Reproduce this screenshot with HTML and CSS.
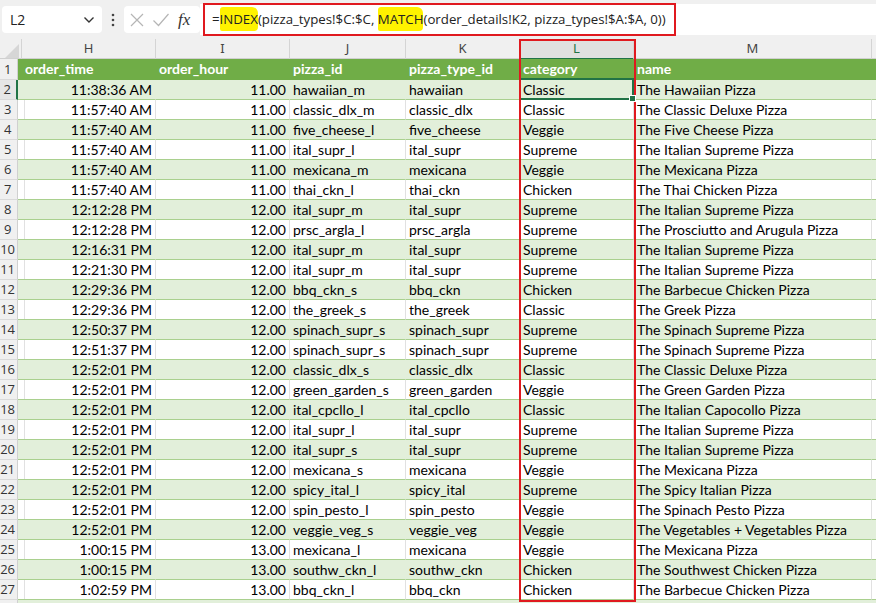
FILE: index.html
```html
<!DOCTYPE html>
<html>
<head>
<meta charset="utf-8">
<link rel="stylesheet" href="styles.css">
</head>
<body>
<div class="toolbar">
  <div class="namebox"><span>L2</span>
    <svg width="12" height="8" viewBox="0 0 12 8"><path d="M1.5 1.5 L6 6 L10.5 1.5" fill="none" stroke="#333" stroke-width="1.4"/></svg>
  </div>
  <div class="dots"><svg width="4" height="14" viewBox="0 0 4 14"><circle cx="2" cy="2" r="1.3" fill="#444"/><circle cx="2" cy="7" r="1.3" fill="#444"/><circle cx="2" cy="12" r="1.3" fill="#444"/></svg></div>
  <div class="fxbox">
    <svg width="16" height="16" viewBox="0 0 16 16"><path d="M2 2 L14 14 M14 2 L2 14" stroke="#b5b5b5" stroke-width="1.2" fill="none"/></svg>
    <svg width="18" height="16" viewBox="0 0 18 16"><path d="M1.5 8.5 L6.5 13.5 L16.5 2" stroke="#b5b5b5" stroke-width="1.2" fill="none"/></svg>
    <span class="fx">fx</span>
  </div>
  <div class="formula">
    <div class="fbox">=<span class="hl">INDEX</span>(pizza_types!$C:$C, <span class="hl">MATCH</span>(order_details!K2, pizza_types!$A:$A, 0))</div>
  </div>
</div>
<div class="grid">
  <div class="row colhdr"><div class="corner"><svg width="14" height="14" viewBox="0 0 14 14"><path d="M14 0 L14 14 L0 14 Z" fill="#d6d6d6"/></svg></div><div class="ch">H</div><div class="ch">I</div><div class="ch">J</div><div class="ch">K</div><div class="ch sel">L</div><div class="ch">M</div><div class="ch"></div></div>
  <div class="row thead"><div class="rh">1</div><div class="c"></div><div class="c">order_time</div><div class="c">order_hour</div><div class="c">pizza_id</div><div class="c">pizza_type_id</div><div class="c">category</div><div class="c">name</div><div class="c"></div></div>
  <div class="row band"><div class="rh selrow">2</div><div class="c"></div><div class="c r">11:38:36 AM</div><div class="c r">11.00</div><div class="c">hawaiian_m</div><div class="c">hawaiian</div><div class="c active">Classic</div><div class="c">The Hawaiian Pizza</div><div class="c"></div></div>
  <div class="row"><div class="rh">3</div><div class="c"></div><div class="c r">11:57:40 AM</div><div class="c r">11.00</div><div class="c">classic_dlx_m</div><div class="c">classic_dlx</div><div class="c">Classic</div><div class="c">The Classic Deluxe Pizza</div><div class="c"></div></div>
  <div class="row band"><div class="rh">4</div><div class="c"></div><div class="c r">11:57:40 AM</div><div class="c r">11.00</div><div class="c">five_cheese_l</div><div class="c">five_cheese</div><div class="c">Veggie</div><div class="c">The Five Cheese Pizza</div><div class="c"></div></div>
  <div class="row"><div class="rh">5</div><div class="c"></div><div class="c r">11:57:40 AM</div><div class="c r">11.00</div><div class="c">ital_supr_l</div><div class="c">ital_supr</div><div class="c">Supreme</div><div class="c">The Italian Supreme Pizza</div><div class="c"></div></div>
  <div class="row band"><div class="rh">6</div><div class="c"></div><div class="c r">11:57:40 AM</div><div class="c r">11.00</div><div class="c">mexicana_m</div><div class="c">mexicana</div><div class="c">Veggie</div><div class="c">The Mexicana Pizza</div><div class="c"></div></div>
  <div class="row"><div class="rh">7</div><div class="c"></div><div class="c r">11:57:40 AM</div><div class="c r">11.00</div><div class="c">thai_ckn_l</div><div class="c">thai_ckn</div><div class="c">Chicken</div><div class="c">The Thai Chicken Pizza</div><div class="c"></div></div>
  <div class="row band"><div class="rh">8</div><div class="c"></div><div class="c r">12:12:28 PM</div><div class="c r">12.00</div><div class="c">ital_supr_m</div><div class="c">ital_supr</div><div class="c">Supreme</div><div class="c">The Italian Supreme Pizza</div><div class="c"></div></div>
  <div class="row"><div class="rh">9</div><div class="c"></div><div class="c r">12:12:28 PM</div><div class="c r">12.00</div><div class="c">prsc_argla_l</div><div class="c">prsc_argla</div><div class="c">Supreme</div><div class="c">The Prosciutto and Arugula Pizza</div><div class="c"></div></div>
  <div class="row band"><div class="rh">10</div><div class="c"></div><div class="c r">12:16:31 PM</div><div class="c r">12.00</div><div class="c">ital_supr_m</div><div class="c">ital_supr</div><div class="c">Supreme</div><div class="c">The Italian Supreme Pizza</div><div class="c"></div></div>
  <div class="row"><div class="rh">11</div><div class="c"></div><div class="c r">12:21:30 PM</div><div class="c r">12.00</div><div class="c">ital_supr_m</div><div class="c">ital_supr</div><div class="c">Supreme</div><div class="c">The Italian Supreme Pizza</div><div class="c"></div></div>
  <div class="row band"><div class="rh">12</div><div class="c"></div><div class="c r">12:29:36 PM</div><div class="c r">12.00</div><div class="c">bbq_ckn_s</div><div class="c">bbq_ckn</div><div class="c">Chicken</div><div class="c">The Barbecue Chicken Pizza</div><div class="c"></div></div>
  <div class="row"><div class="rh">13</div><div class="c"></div><div class="c r">12:29:36 PM</div><div class="c r">12.00</div><div class="c">the_greek_s</div><div class="c">the_greek</div><div class="c">Classic</div><div class="c">The Greek Pizza</div><div class="c"></div></div>
  <div class="row band"><div class="rh">14</div><div class="c"></div><div class="c r">12:50:37 PM</div><div class="c r">12.00</div><div class="c">spinach_supr_s</div><div class="c">spinach_supr</div><div class="c">Supreme</div><div class="c">The Spinach Supreme Pizza</div><div class="c"></div></div>
  <div class="row"><div class="rh">15</div><div class="c"></div><div class="c r">12:51:37 PM</div><div class="c r">12.00</div><div class="c">spinach_supr_s</div><div class="c">spinach_supr</div><div class="c">Supreme</div><div class="c">The Spinach Supreme Pizza</div><div class="c"></div></div>
  <div class="row band"><div class="rh">16</div><div class="c"></div><div class="c r">12:52:01 PM</div><div class="c r">12.00</div><div class="c">classic_dlx_s</div><div class="c">classic_dlx</div><div class="c">Classic</div><div class="c">The Classic Deluxe Pizza</div><div class="c"></div></div>
  <div class="row"><div class="rh">17</div><div class="c"></div><div class="c r">12:52:01 PM</div><div class="c r">12.00</div><div class="c">green_garden_s</div><div class="c">green_garden</div><div class="c">Veggie</div><div class="c">The Green Garden Pizza</div><div class="c"></div></div>
  <div class="row band"><div class="rh">18</div><div class="c"></div><div class="c r">12:52:01 PM</div><div class="c r">12.00</div><div class="c">ital_cpcllo_l</div><div class="c">ital_cpcllo</div><div class="c">Classic</div><div class="c">The Italian Capocollo Pizza</div><div class="c"></div></div>
  <div class="row"><div class="rh">19</div><div class="c"></div><div class="c r">12:52:01 PM</div><div class="c r">12.00</div><div class="c">ital_supr_l</div><div class="c">ital_supr</div><div class="c">Supreme</div><div class="c">The Italian Supreme Pizza</div><div class="c"></div></div>
  <div class="row band"><div class="rh">20</div><div class="c"></div><div class="c r">12:52:01 PM</div><div class="c r">12.00</div><div class="c">ital_supr_s</div><div class="c">ital_supr</div><div class="c">Supreme</div><div class="c">The Italian Supreme Pizza</div><div class="c"></div></div>
  <div class="row"><div class="rh">21</div><div class="c"></div><div class="c r">12:52:01 PM</div><div class="c r">12.00</div><div class="c">mexicana_s</div><div class="c">mexicana</div><div class="c">Veggie</div><div class="c">The Mexicana Pizza</div><div class="c"></div></div>
  <div class="row band"><div class="rh">22</div><div class="c"></div><div class="c r">12:52:01 PM</div><div class="c r">12.00</div><div class="c">spicy_ital_l</div><div class="c">spicy_ital</div><div class="c">Supreme</div><div class="c">The Spicy Italian Pizza</div><div class="c"></div></div>
  <div class="row"><div class="rh">23</div><div class="c"></div><div class="c r">12:52:01 PM</div><div class="c r">12.00</div><div class="c">spin_pesto_l</div><div class="c">spin_pesto</div><div class="c">Veggie</div><div class="c">The Spinach Pesto Pizza</div><div class="c"></div></div>
  <div class="row band"><div class="rh">24</div><div class="c"></div><div class="c r">12:52:01 PM</div><div class="c r">12.00</div><div class="c">veggie_veg_s</div><div class="c">veggie_veg</div><div class="c">Veggie</div><div class="c">The Vegetables + Vegetables Pizza</div><div class="c"></div></div>
  <div class="row"><div class="rh">25</div><div class="c"></div><div class="c r">1:00:15 PM</div><div class="c r">13.00</div><div class="c">mexicana_l</div><div class="c">mexicana</div><div class="c">Veggie</div><div class="c">The Mexicana Pizza</div><div class="c"></div></div>
  <div class="row band"><div class="rh">26</div><div class="c"></div><div class="c r">1:00:15 PM</div><div class="c r">13.00</div><div class="c">southw_ckn_l</div><div class="c">southw_ckn</div><div class="c">Chicken</div><div class="c">The Southwest Chicken Pizza</div><div class="c"></div></div>
  <div class="row"><div class="rh">27</div><div class="c"></div><div class="c r">1:02:59 PM</div><div class="c r">13.00</div><div class="c">bbq_ckn_l</div><div class="c">bbq_ckn</div><div class="c">Chicken</div><div class="c">The Barbecue Chicken Pizza</div><div class="c"></div></div>
  <div class="row band"><div class="rh"></div><div class="c"></div><div class="c r"></div><div class="c r"></div><div class="c"></div><div class="c"></div><div class="c"></div><div class="c"></div><div class="c"></div></div>
</div>
<div class="redcol"></div>
</body>
</html>
```
FILE: styles.css
```css
* { box-sizing: border-box; }
html, body { margin: 0; padding: 0; }
body {
  width: 876px;
  height: 603px;
  overflow: hidden;
  background: #fff;
  position: relative;
  font-family: "Lato", "Liberation Sans", sans-serif;
  color: #000;
}
.toolbar {
  display: flex;
  align-items: center;
  height: 39px;
  background: #f0f0f0;
  padding-left: 2px;
}
.namebox {
  width: 100px;
  height: 27px;
  background: #fff;
  border-radius: 4px;
  display: flex;
  align-items: center;
  justify-content: space-between;
  padding: 0 7px 0 8px;
  font: 14px "Open Sans", sans-serif;
  color: #222;
}
.dots {
  width: 22px;
  display: flex;
  justify-content: center;
  align-items: center;
}
.fxbox {
  width: 76px;
  height: 27px;
  background: #fff;
  border-radius: 4px;
  display: flex;
  align-items: center;
  gap: 7px;
  padding-left: 5px;
}
.fx {
  font: italic 17px "Liberation Serif", serif;
  color: #333;
  margin-left: 1px;
}
.formula {
  flex: 1;
  height: 31px;
  background: #fff;
  display: flex;
  align-items: center;
}
.fbox {
  margin-left: 3px;
  width: 473px;
  height: 33px;
  border: 2px solid #e0191f;
  padding-left: 7px;
  white-space: pre;
  font: 13.25px/28px "Open Sans", sans-serif;
  color: #222;
}
.hl {
  background: #fff200;
  border-radius: 3px 6px 4px 2px;
  padding: 3px 0;
}
.grid {
  width: 952px;
}
.row {
  display: grid;
  grid-template-columns: 18px 4px 134px 134px 116px 114px 114px 238px 80px;
  height: 20px;
  line-height: 19px;
  font-size: 14px;
}
.colhdr {
  grid-template-columns: 22px 134px 134px 116px 114px 114px 238px 80px;
  height: 20px;
  background: #f0f0f0;
  border-bottom: 1px solid #d0d0d0;
  font: 13px "Noto Sans", sans-serif;
  color: #444;
  line-height: 19px;
}
.corner {
  border-right: 1px solid #d4d4d4;
  display: flex;
  align-items: flex-end;
  justify-content: flex-end;
  padding: 0 2px 2px 0;
}
.ch {
  text-align: center;
  border-right: 1px solid #d4d4d4;
}
.ch.sel {
  background: #e0e0e0;
  color: #217346;
  border-bottom: 2px solid #217346;
}
.rh {
  background: #f0f0f0;
  text-align: center;
  color: #333;
  border-right: 1px solid #d0d0d0;
  border-bottom: 1px solid #dadada;
  font: 13px "Open Sans", sans-serif;
  letter-spacing: -0.3px;
  line-height: 19px;
  padding-right: 2px;
  white-space: nowrap;
}
.rh.selrow {
  border-right: 2px solid #217346;
  background: #e6e6e6;
}
.c {
  padding: 0 3px;
  white-space: nowrap;
  overflow: hidden;
  border-right: 1px solid #e1e1e1;
  border-bottom: 1px solid #a9d08e;
}
.c.r { text-align: right; }
.band .c {
  background: #e2efda;
  border-right-color: #e2efda;
}
.thead {
  height: 21px;
  line-height: 20px;
}
.thead .c {
  background: #70ad47;
  color: #fff;
  font-weight: 700;
  border-right-color: #70ad47;
  border-bottom: 1px solid #70ad47;
}
.thead .rh { line-height: 20px; }
.c.active {
  position: relative;
  overflow: visible;
}
.c.active::after {
  content: "";
  position: absolute;
  left: -1px;
  right: -1px;
  top: -2px;
  bottom: -1px;
  border: 2px solid #217346;
}
.c.active::before {
  content: "";
  position: absolute;
  right: -3px;
  bottom: -3px;
  width: 5px;
  height: 5px;
  background: #217346;
  border: 1px solid #fff;
  z-index: 2;
}
.redcol {
  position: absolute;
  left: 519px;
  top: 39px;
  width: 117px;
  height: 563px;
  border: 2px solid #e0191f;
  pointer-events: none;
}
```
